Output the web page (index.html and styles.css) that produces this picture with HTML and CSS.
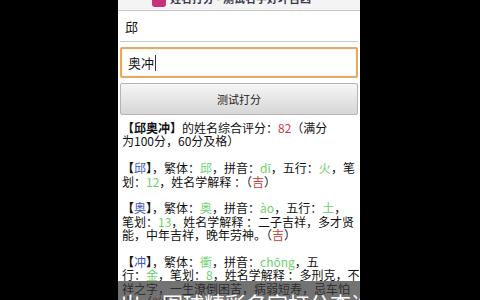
FILE: index.html
```html
<!DOCTYPE html>
<html lang="zh-CN">
<head>
    <meta charset="UTF-8">
    <title>姓名打分</title>
    <link rel="stylesheet" href="styles.css">
</head>
<body>
    <div class="phone">
        <div class="titlebar">
            <span class="app-icon"></span>
            <span class="app-title">姓名打分 - 测试名字好坏吉凶</span>
        </div>

        <div class="field">邱</div>
        <div class="field focused">奥冲<span class="cursor"></span></div>
        <button class="score-btn">测试打分</button>

        <div class="result">
            <p><b>【邱奥冲】</b>的姓名综合评分：<span class="red">82</span>（满分<br>为100分，60分及格）</p>
            <p><b>【</b><span class="blue">邱</span><b>】</b>，繁体：<span class="green">邱</span>，拼音：<span class="green">dī</span>，五行：<span class="green">火</span>，笔<br>划：<span class="green">12</span>，姓名学解释 ：（<span class="red">吉</span>）</p>
            <p><b>【</b><span class="blue">奥</span><b>】</b>，繁体：<span class="green">奥</span>，拼音：<span class="green">ào</span>，五行：<span class="green">土</span>，<br>笔划：<span class="green">13</span>，姓名学解释 ：二子吉祥，多才贤<br>能，中年吉祥，晚年劳神。（<span class="red">吉</span>）</p>
            <p><b>【</b><span class="blue">冲</span><b>】</b>，繁体：<span class="green">衝</span>，拼音：<span class="green">chōng</span>，五<br>行：<span class="green">金</span>，笔划：<span class="green">8</span>，姓名学解释 ：多刑克，不<br>祥之字，一生潦倒困苦，病弱短寿，忌车怕<br>出。（<span class="red">凶</span>）</p>
        </div>

        <div class="caption">出。图球精彩名字打分查询</div>
    </div>
</body>
</html>
```

FILE: styles.css
```css
html, body {
    margin: 0;
    height: 300px;
    background: #000;
    overflow: hidden;
}
body {
    font-family: "Noto Sans CJK SC", "Liberation Sans", sans-serif;
}
.phone {
    position: relative;
    width: 242px;
    height: 300px;
    margin-left: 118px;
    background: #fff;
    overflow: hidden;
}
.titlebar {
    height: 10px;
    display: flex;
    align-items: flex-end;
    gap: 4px;
    padding-left: 34px;
    background: #f4f4f4;
    border-bottom: 1px solid #c8c8c8;
    overflow: hidden;
}
.app-icon {
    flex: none;
    width: 14px;
    height: 14px;
    margin-bottom: 3px;
    border-radius: 3px;
    background: #c8307a;
}
.app-title {
    font-size: 11px;
    line-height: 13px;
    margin-bottom: 5px;
    color: #3a3a4a;
    font-weight: bold;
    white-space: nowrap;
}
.field {
    height: 30px;
    margin: 0 2px 5px 2px;
    padding-left: 5px;
    display: flex;
    align-items: center;
    font-size: 13px;
    color: #111;
    border-bottom: 1px solid #c8c8c8;
}
.field.focused {
    height: 27px;
    padding-left: 6px;
    border: 2px solid #e2aa62;
    border-radius: 2px;
    box-shadow: inset 0 0 2px #f6dcb0;
}
.cursor {
    width: 1px;
    height: 16px;
    margin-left: 1px;
    background: #334;
}
.score-btn {
    display: block;
    width: 238px;
    height: 32px;
    margin: 0 2px;
    font-family: inherit;
    font-size: 11px;
    color: #222;
    background: linear-gradient(#f6f6f6, #d6d6d6);
    border: 1px solid #b4b4b4;
    border-radius: 2px;
}
.result {
    padding: 6px 0 0 4px;
    font-size: 12px;
    line-height: 13.4px;
    color: #111;
    white-space: nowrap;
}
.result p {
    margin: 0 0 13.4px 0;
}
.red {
    color: #c83c3c;
}
.green {
    color: #6fcf6f;
}
.blue {
    color: #3c55c0;
}
.caption {
    position: absolute;
    left: 0;
    right: 0;
    top: 281px;
    height: 40px;
    padding: 8px 0 0 2px;
    box-sizing: border-box;
    background: rgba(55, 55, 55, 0.7);
    color: #fff;
    font-size: 21px;
    line-height: 28px;
    white-space: nowrap;
}
```
